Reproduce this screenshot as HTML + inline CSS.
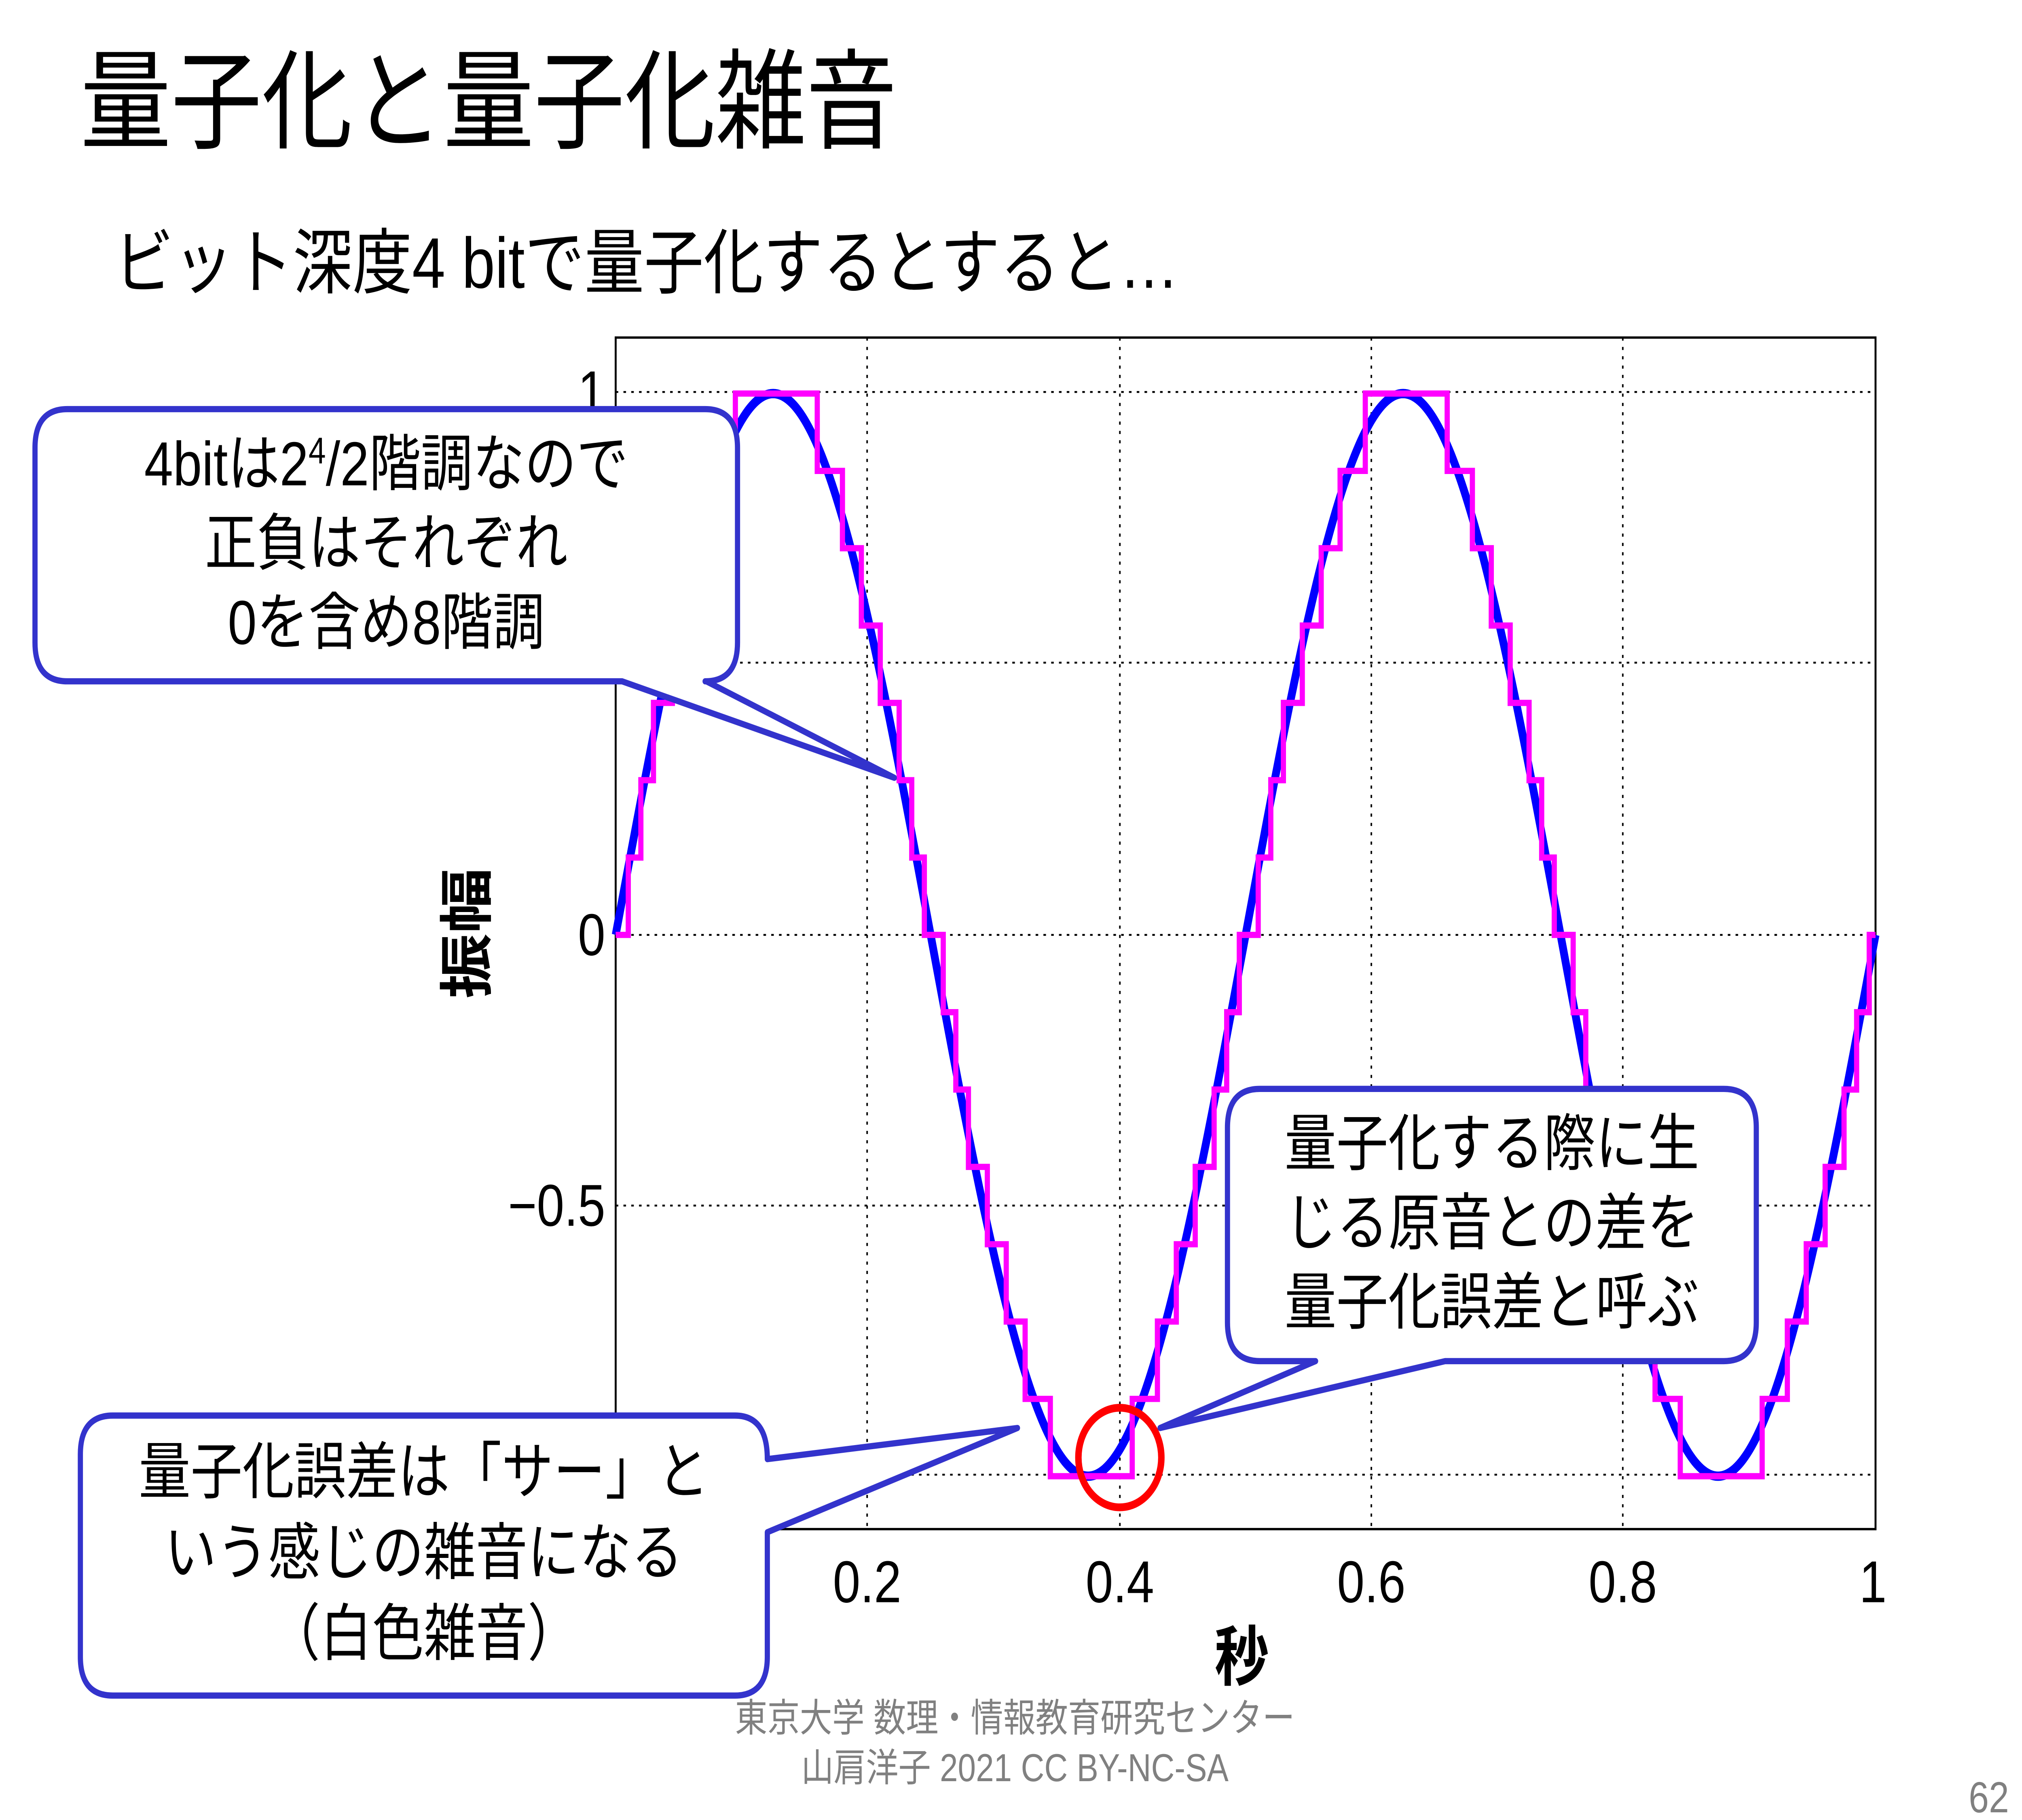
<!DOCTYPE html>
<html><head><meta charset="utf-8"><style>
html,body{margin:0;padding:0;background:#fff;overflow:hidden;width:100vw;height:100vh}
svg{display:block;width:100vw;height:100vh}
text{font-family:"Liberation Sans","Noto Sans CJK JP",sans-serif}
</style></head><body>
<svg id="s" viewBox="0 0 1560 1170" preserveAspectRatio="none" xmlns="http://www.w3.org/2000/svg">
<rect width="1560" height="1170" fill="#fff"/>
<text x="62" y="90" font-size="70" fill="#000">量子化と量子化雑音</text>
<text x="88" y="185" font-size="46" fill="#000">ビット深度4 bitで量子化するとすると…</text>
<g stroke="#000" stroke-width="1.2" stroke-dasharray="2,4" fill="none">
<line x1="669" y1="217" x2="669" y2="983"/><line x1="864" y1="217" x2="864" y2="983"/>
<line x1="1058" y1="217" x2="1058" y2="983"/><line x1="1252" y1="217" x2="1252" y2="983"/>
<line x1="475" y1="252" x2="1447" y2="252"/><line x1="475" y1="426" x2="1447" y2="426"/>
<line x1="475" y1="601" x2="1447" y2="601"/><line x1="475" y1="775" x2="1447" y2="775"/>
<line x1="475" y1="948" x2="1447" y2="948"/>
</g>
<rect x="475" y="217" width="972" height="766" fill="none" stroke="#000" stroke-width="1.5"/>
<path id="sine" fill="none" stroke="#0000ff" stroke-width="6"/>
<path id="stair" fill="none" stroke="#ff00ff" stroke-width="4"/>
<g font-size="38" fill="#000" text-anchor="end">
<text x="467" y="265">1</text><text x="467" y="614">0</text><text x="467" y="788">−0.5</text>
</g>
<g font-size="38" fill="#000" text-anchor="middle">
<text x="669" y="1030">0.2</text><text x="864" y="1030">0.4</text><text x="1058" y="1030">0.6</text><text x="1252" y="1030">0.8</text><text x="1445" y="1030">1</text>
</g>
<text x="958" y="1080" font-size="42" font-weight="bold" text-anchor="middle">秒</text>
<text transform="translate(375,600) rotate(-90)" font-size="42" font-weight="bold" text-anchor="middle">振幅</text>
<g fill="#fff" stroke="#3333cc" stroke-width="4" stroke-linejoin="round">
<path d="M52 263 H544 Q569 263 569 288 V413 Q569 438 544 438 H545 L690 500 L480 438 H52 Q27 438 27 413 V288 Q27 263 52 263 Z"/>
<path d="M972 700 H1330 Q1355 700 1355 725 V850 Q1355 875 1330 875 H1115 L895 918 L1015 875 H972 Q947 875 947 850 V725 Q947 700 972 700 Z"/>
<path d="M87 910 H567 Q592 910 592 938 L785 918 L592 985 V1065 Q592 1090 567 1090 H87 Q62 1090 62 1065 V935 Q62 910 87 910 Z"/>
</g>
<circle cx="864" cy="937" r="32" fill="none" stroke="#ff0000" stroke-width="5"/>
<g font-size="40" fill="#000" text-anchor="middle">
<text x="298" y="312">4bitは2<tspan font-size="24" dy="-14">4</tspan><tspan dy="14">/2階調なので</tspan></text>
<text x="298" y="363">正負はそれぞれ</text>
<text x="298" y="414">0を含め8階調</text>
<text x="1151" y="749">量子化する際に生</text>
<text x="1151" y="800">じる原音との差を</text>
<text x="1151" y="851">量子化誤差と呼ぶ</text>
<text x="327" y="960">量子化誤差は「サー」と</text>
<text x="327" y="1012">いう感じの雑音になる</text>
<text x="327" y="1064">（白色雑音）</text>
</g>
<g font-size="25" fill="#808080" text-anchor="middle">
<text x="783" y="1113">東京大学 数理・情報教育研究センター</text>
<text x="783" y="1145">山肩洋子 2021 CC BY-NC-SA</text>
</g>
<text x="1550" y="1165" font-size="28" fill="#808080" text-anchor="end">62</text>
</svg>
<script>
var X=function(t){return 475+972*t},Y=function(v){return 601-348*v};
var d="";for(var i=0;i<=600;i++){var t=i/600;d+=(i?"L":"M")+X(t).toFixed(2)+" "+Y(Math.sin(4*Math.PI*t)).toFixed(2);}
document.getElementById("sine").setAttribute("d",d);
var fs=200,p="";
for(var n=0;n<fs;n++){var t=n/fs,q=Math.round(7*Math.sin(4*Math.PI*t))/7;var y=Y(q).toFixed(2);
p+=(n?"L":"M")+X(t).toFixed(2)+" "+y+"L"+X((n+1)/fs).toFixed(2)+" "+y;}
p+="L"+X(1)+" "+Y(0);
document.getElementById("stair").setAttribute("d",p);
</script>
</body></html>
